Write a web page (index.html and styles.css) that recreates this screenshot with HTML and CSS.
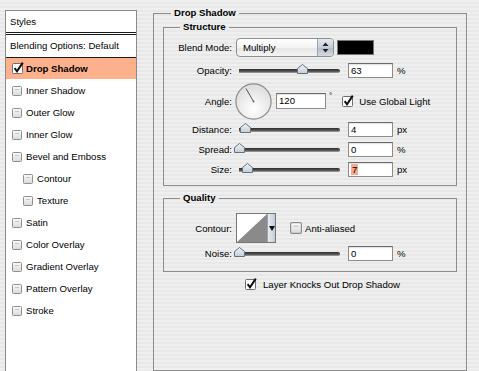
FILE: index.html
```html
<!DOCTYPE html>
<html lang="en">
<head>
    <meta charset="UTF-8">
    <meta name="viewport" content="width=device-width, initial-scale=1.0">
    <title>Layer Style - Drop Shadow</title>
    <link rel="stylesheet" href="styles.css">
</head>
<body>
    <svg class="defs" width="0" height="0" aria-hidden="true">
        <defs>
            <linearGradient id="boxFill" x1="0" y1="0" x2="0" y2="1">
                <stop offset="0" stop-color="#fbfbfb"/>
                <stop offset="1" stop-color="#d9d9d9"/>
            </linearGradient>
            <linearGradient id="thumbFill" x1="0" y1="0" x2="0" y2="1">
                <stop offset="0" stop-color="#f2f5f8"/>
                <stop offset="1" stop-color="#c3ccd6"/>
            </linearGradient>
            <radialGradient id="dialFill" cx="0.5" cy="0.7" r="0.6">
                <stop offset="0" stop-color="#ffffff"/>
                <stop offset="1" stop-color="#e0e0e0"/>
            </radialGradient>
            <symbol id="cb-off" viewBox="0 0 10 10">
                <rect x="0.5" y="0.5" width="9" height="9" rx="1" fill="url(#boxFill)" stroke="#8f8f8f"/>
                <line x1="3" y1="3.5" x2="7" y2="3.5" stroke="#c4c4c4"/>
            </symbol>
            <symbol id="cb-on" viewBox="0 0 12 12">
                <rect x="0.5" y="1.5" width="10" height="10" rx="1" fill="#fff" stroke="#6f6f6f"/>
                <path d="M2.6 6.2 L5 9.3 L10.8 0.6" fill="none" stroke="#111" stroke-width="2"/>
            </symbol>
            <symbol id="thumb" viewBox="0 0 11 10">
                <polygon points="0.5,9.5 0.5,4.5 5.5,0.5 10.5,4.5 10.5,9.5" fill="url(#thumbFill)" stroke="#65707d"/>
            </symbol>
        </defs>
    </svg>

    <div class="window">
        <aside class="sidebar">
            <div class="side-title">Styles</div>
            <div class="side-blend">Blending Options: Default</div>
            <ul class="effects">
                <li class="active"><svg class="cb"><use href="#cb-on"/></svg>Drop Shadow</li>
                <li><svg class="cb"><use href="#cb-off"/></svg>Inner Shadow</li>
                <li><svg class="cb"><use href="#cb-off"/></svg>Outer Glow</li>
                <li><svg class="cb"><use href="#cb-off"/></svg>Inner Glow</li>
                <li><svg class="cb"><use href="#cb-off"/></svg>Bevel and Emboss</li>
                <li class="sub"><svg class="cb"><use href="#cb-off"/></svg>Contour</li>
                <li class="sub"><svg class="cb"><use href="#cb-off"/></svg>Texture</li>
                <li><svg class="cb"><use href="#cb-off"/></svg>Satin</li>
                <li><svg class="cb"><use href="#cb-off"/></svg>Color Overlay</li>
                <li><svg class="cb"><use href="#cb-off"/></svg>Gradient Overlay</li>
                <li><svg class="cb"><use href="#cb-off"/></svg>Pattern Overlay</li>
                <li><svg class="cb"><use href="#cb-off"/></svg>Stroke</li>
            </ul>
        </aside>

        <fieldset class="panel">
            <legend>Drop Shadow</legend>

            <fieldset class="group structure">
                <legend>Structure</legend>
                <div class="row blend">
                    <span class="label">Blend Mode:</span>
                    <div class="popup">
                        <span class="popup-text">Multiply</span>
                        <span class="popup-arrows">
                            <svg width="7" height="11" viewBox="0 0 7 11"><polygon points="3.5,0.5 6.5,4 0.5,4" fill="#222"/><polygon points="3.5,10.5 6.5,7 0.5,7" fill="#222"/></svg>
                        </span>
                    </div>
                    <span class="swatch"></span>
                </div>
                <div class="row">
                    <span class="label">Opacity:</span>
                    <div class="slider"><svg class="thumb" style="left: 63px"><use href="#thumb"/></svg></div>
                    <span class="field">63</span>
                    <span class="unit">%</span>
                </div>
                <div class="row angle">
                    <span class="label">Angle:</span>
                    <svg class="dial" width="37" height="37" viewBox="0 0 37 37">
                        <circle cx="18.5" cy="18.5" r="17.6" fill="url(#dialFill)" stroke="#8c8c8c" stroke-width="1.2"/>
                        <line x1="18.5" y1="18.5" x2="11" y2="5.5" stroke="#555" stroke-width="1"/>
                        <circle cx="18.5" cy="18.5" r="1" fill="#666"/>
                    </svg>
                    <span class="field wide">120</span>
                    <span class="degree">°</span>
                    <svg class="cb-big"><use href="#cb-on"/></svg>
                    <span class="check-label">Use Global Light</span>
                </div>
                <div class="row distance">
                    <span class="label">Distance:</span>
                    <div class="slider"><svg class="thumb" style="left: 6px"><use href="#thumb"/></svg></div>
                    <span class="field">4</span>
                    <span class="unit">px</span>
                </div>
                <div class="row">
                    <span class="label">Spread:</span>
                    <div class="slider"><svg class="thumb" style="left: 0px"><use href="#thumb"/></svg></div>
                    <span class="field">0</span>
                    <span class="unit">%</span>
                </div>
                <div class="row">
                    <span class="label">Size:</span>
                    <div class="slider"><svg class="thumb" style="left: 8px"><use href="#thumb"/></svg></div>
                    <span class="field"><span class="selected">7</span></span>
                    <span class="unit">px</span>
                </div>
            </fieldset>

            <fieldset class="group quality">
                <legend>Quality</legend>
                <div class="row contour-row">
                    <span class="label">Contour:</span>
                    <div class="contour">
                        <svg class="curve" width="30" height="28" viewBox="0 0 30 28">
                            <polygon points="0,28 30,0 30,28" fill="#8a8a8a"/>
                        </svg>
                        <span class="contour-arrow">
                            <svg width="6" height="5" viewBox="0 0 6 5"><polygon points="0,0 6,0 3,5" fill="#111"/></svg>
                        </span>
                    </div>
                    <svg class="cb-big anti"><use href="#cb-off"/></svg>
                    <span class="check-label">Anti-aliased</span>
                </div>
                <div class="row noise">
                    <span class="label">Noise:</span>
                    <div class="slider"><svg class="thumb" style="left: 0px"><use href="#thumb"/></svg></div>
                    <span class="field">0</span>
                    <span class="unit">%</span>
                </div>
            </fieldset>

            <div class="knockout">
                <svg class="cb-big"><use href="#cb-on"/></svg>
                <span class="check-label">Layer Knocks Out Drop Shadow</span>
            </div>
        </fieldset>
    </div>
</body>
</html>
```

FILE: styles.css
```css
html, body {
    height: 100%;
}
body {
    margin: 0;
    overflow: hidden;
    font-family: "Liberation Sans", Arial, sans-serif;
    font-size: 9.6px;
    color: #000;
    background: repeating-linear-gradient(to bottom, #efefef 0, #efefef 2px, #e8e8e8 2px, #e8e8e8 4px);
}
.defs {
    position: absolute;
}
.window {
    display: flex;
    align-items: flex-start;
    padding-left: 5px;
}

/* left list of effects */
.sidebar {
    box-sizing: border-box;
    width: 132px;
    height: 361px;
    margin-top: 10px;
    background: #fff;
    border: 1px solid #8a8a8a;
    border-bottom: none;
    flex: none;
}
.side-title {
    height: 21px;
    line-height: 21px;
    padding-left: 4px;
    border-bottom: 3px double #1a1a1a;
}
.side-blend {
    height: 22px;
    line-height: 21px;
    padding-left: 4px;
    border-bottom: 1px solid #1a1a1a;
}
.effects {
    list-style: none;
    margin: 0;
    padding: 0;
}
.effects li {
    display: flex;
    align-items: center;
    height: 21px;
    margin-bottom: 1px;
    padding-left: 6px;
}
.effects li.sub {
    padding-left: 17px;
}
.effects li.active {
    font-weight: bold;
    background: #fcb08b;
}
.effects .cb {
    width: 10px;
    height: 10px;
    margin-right: 4px;
    flex: none;
}
.effects li.active .cb {
    width: 12px;
    height: 12px;
    margin-right: 2px;
    margin-top: -2px;
}

/* group boxes */
fieldset {
    margin: 0;
    min-width: 0;
    border: 1px solid #8d8d8d;
}
legend {
    padding: 0 3px;
    line-height: 12px;
    font-weight: bold;
}
.panel {
    box-sizing: border-box;
    width: 314px;
    height: 364px;
    margin: 7px 0 0 16px;
    padding: 0 9px 0 9px;
    flex: none;
}
.panel > legend {
    margin-left: 8px;
}
.group {
    padding: 0 0 8px 0;
}
.group > legend {
    margin-left: 16px;
}
.structure {
    margin-top: 2px;
}
.quality {
    margin-top: 6px;
    padding-bottom: 10px;
}

/* rows */
.row {
    display: flex;
    align-items: center;
    height: 16px;
    margin-top: 4px;
}
.row.blend {
    height: 20px;
    margin-top: 4px;
}
.row.blend + .row {
    margin-top: 5px;
}
.row.angle {
    height: 38px;
}
.row.distance {
    margin-top: 1px;
}
.row.contour-row {
    height: 30px;
    margin-top: 9px;
}
.row.noise {
    margin-top: 2px;
}
.label {
    width: 68px;
    margin-right: 2px;
    text-align: right;
    flex: none;
}

/* popup menu */
.popup {
    display: flex;
    width: 96px;
    height: 17px;
    margin-left: 2px;
    border: 1px solid #8e8e8e;
    border-radius: 4px;
    background: linear-gradient(#ffffff, #f3f3f3 50%, #e6e6e6 51%, #f4f4f4);
    overflow: hidden;
}
.popup-text {
    flex: 1;
    padding-left: 6px;
    line-height: 17px;
}
.popup-arrows {
    display: flex;
    align-items: center;
    justify-content: center;
    width: 15px;
    border-left: 1px solid #9aa3ae;
    background: linear-gradient(#e4e9ef, #c5ced8 50%, #b3bdc9 51%, #d4dbe3);
}
.swatch {
    width: 35px;
    height: 13px;
    margin-left: 3px;
    background: #000;
    border: 1px solid #777;
}

/* sliders */
.slider {
    position: relative;
    width: 106px;
    height: 16px;
    flex: none;
}
.slider::before {
    content: "";
    position: absolute;
    left: 5px;
    right: 0;
    top: 7px;
    height: 4px;
    border-radius: 0 2px 2px 0;
    background: linear-gradient(#2e2e2e, #555 60%, #a9a9a9);
}
.thumb {
    position: absolute;
    top: 2px;
    width: 11px;
    height: 10px;
}
.field {
    width: 41px;
    height: 13px;
    margin-left: 8px;
    padding-left: 2px;
    line-height: 13px;
    background: #fff;
    border: 1px solid #8c8c8c;
    border-top-color: #6a6a6a;
    box-shadow: inset 0 1px 1px rgba(0, 0, 0, 0.12);
    flex: none;
}
.field.wide {
    width: 46px;
    height: 14px;
    margin-left: 4px;
    line-height: 14px;
}
.selected {
    background: #f6a98c;
    padding: 0 1px;
}
.unit {
    margin-left: 4px;
}

/* angle */
.dial {
    margin-left: 1px;
    flex: none;
}
.degree {
    align-self: flex-start;
    margin: 9px 0 0 3px;
    font-size: 8px;
}
.cb-big {
    width: 12px;
    height: 12px;
    margin-left: 10px;
    flex: none;
}
.check-label {
    margin-left: 5px;
}

/* contour */
.contour {
    display: flex;
    width: 38px;
    height: 28px;
    margin-left: 2px;
    border: 1px solid #767676;
    background: #fff;
    flex: none;
}
.contour .curve {
    display: block;
    flex: none;
}
.contour-arrow {
    display: flex;
    align-items: center;
    justify-content: center;
    flex: 1;
    border-left: 1px solid #9aa3ae;
    background: linear-gradient(to right, #e6ebf1, #c3ccd7);
}
.cb-big.anti {
    margin-left: 14px;
}
.quality .check-label {
    margin-left: 3px;
}

.knockout {
    display: flex;
    align-items: center;
    height: 14px;
    margin: 5px 0 0 72px;
}
.knockout .check-label {
    margin-left: 6px;
}
```
